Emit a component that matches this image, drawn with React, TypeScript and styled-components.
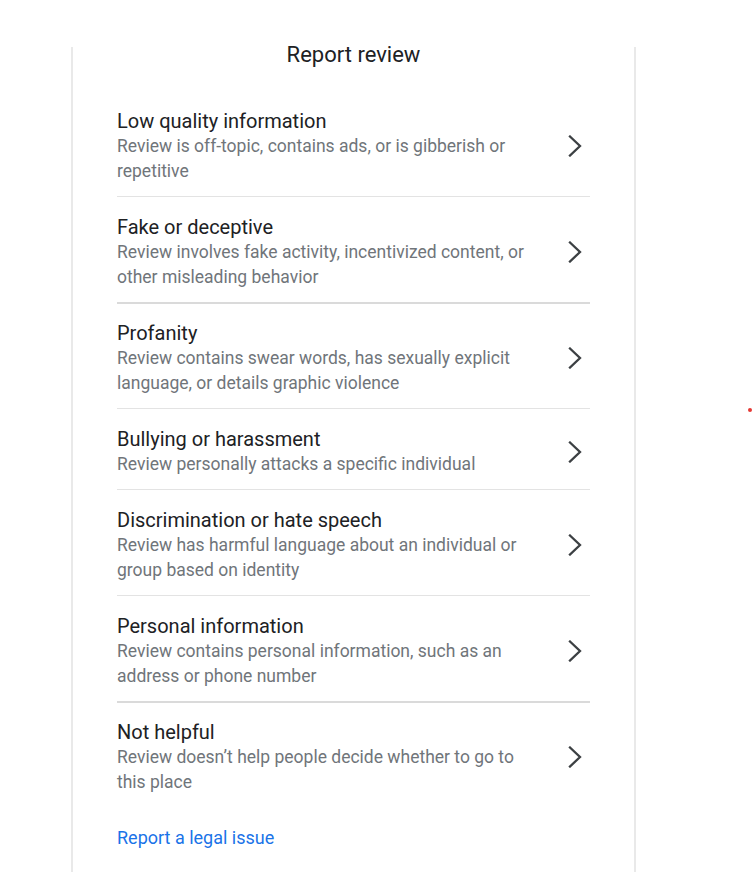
import React from "react";
import styled, { createGlobalStyle } from "styled-components";

const GlobalStyle = createGlobalStyle`
  html, body {
    margin: 0;
    padding: 0;
    background: #ffffff;
    font-family: Roboto, "Noto Sans", Arial, sans-serif;
    -webkit-font-smoothing: antialiased;
  }
`;

const Page = styled.div`
  position: relative;
  height: 100vh;
  padding-top: 47px;
  box-sizing: border-box;
  overflow: hidden;
`;

const Card = styled.div`
  display: flow-root;
  margin-left: 71px;
  width: 565px;
  height: 100%;
  box-sizing: border-box;
  border-left: 2px solid #e9e9e9;
  border-right: 2px solid #e9e9e9;
  padding: 0 44px;
  background: #fff;
`;

const Heading = styled.h2`
  margin: -6px 0 0;
  font-size: 22px;
  line-height: 28px;
  font-weight: 400;
  color: #202124;
  text-align: center;
`;

const List = styled.div`
  margin-top: 22px;
  display: flex;
  flex-direction: column;
`;

const Row = styled.div<{ $last?: boolean; $strong?: boolean }>`
  display: flex;
  align-items: center;
  padding: 17px 0 12px;
  border-bottom: ${(p) =>
    p.$last ? "none" : p.$strong ? "2px solid #dadada" : "1px solid #e3e3e3"};
  margin-bottom: ${(p) => (p.$strong ? "-1px" : "0")};
  cursor: pointer;
`;

const Texts = styled.div`
  flex: 1;
  min-width: 0;
  padding-right: 10px;
`;

const Title = styled.div`
  font-size: 20px;
  line-height: 26px;
  color: #202124;
`;

const Desc = styled.div`
  font-size: 17.5px;
  line-height: 25px;
  color: #70757a;
`;

const Chevron = styled.div`
  flex: 0 0 38px;
  display: flex;
  justify-content: flex-end;
  padding-right: 8px;
  box-sizing: border-box;
  color: #3c4043;
`;

const LegalLink = styled.a`
  display: inline-block;
  margin-top: 18px;
  font-size: 18px;
  line-height: 25px;
  color: #1a73e8;
  text-decoration: none;
`;

const Dot = styled.span`
  position: absolute;
  left: 748px;
  top: 408px;
  width: 4px;
  height: 4px;
  border-radius: 50%;
  background: #e53935;
`;

const ChevronIcon = () => (
  <svg width="14" height="22" viewBox="0 0 14 22" fill="none">
    <polyline
      points="2,1.5 12,11 2,20.5"
      stroke="currentColor"
      strokeWidth="2.3"
      strokeLinecap="square"
      strokeLinejoin="miter"
    />
  </svg>
);

const items = [
  {
    title: "Low quality information",
    desc: "Review is off-topic, contains ads, or is gibberish or repetitive",
  },
  {
    title: "Fake or deceptive",
    desc: "Review involves fake activity, incentivized content, or other misleading behavior",
    strong: true,
  },
  {
    title: "Profanity",
    desc: "Review contains swear words, has sexually explicit language, or details graphic violence",
  },
  {
    title: "Bullying or harassment",
    desc: "Review personally attacks a specific individual",
  },
  {
    title: "Discrimination or hate speech",
    desc: "Review has harmful language about an individual or group based on identity",
  },
  {
    title: "Personal information",
    desc: "Review contains personal information, such as an address or phone number",
    strong: true,
  },
  {
    title: "Not helpful",
    desc: "Review doesn\u2019t help people decide whether to go to this place",
  },
];

const App = () => (
  <Page>
    <GlobalStyle />
    <Card>
      <Heading>Report review</Heading>
      <List>
        {items.map((item, i) => (
          <Row key={item.title} $last={i === items.length - 1} $strong={item.strong}>
            <Texts>
              <Title>{item.title}</Title>
              <Desc>{item.desc}</Desc>
            </Texts>
            <Chevron>
              <ChevronIcon />
            </Chevron>
          </Row>
        ))}
      </List>
      <LegalLink href="#">Report a legal issue</LegalLink>
    </Card>
    <Dot />
  </Page>
);

export default App;
